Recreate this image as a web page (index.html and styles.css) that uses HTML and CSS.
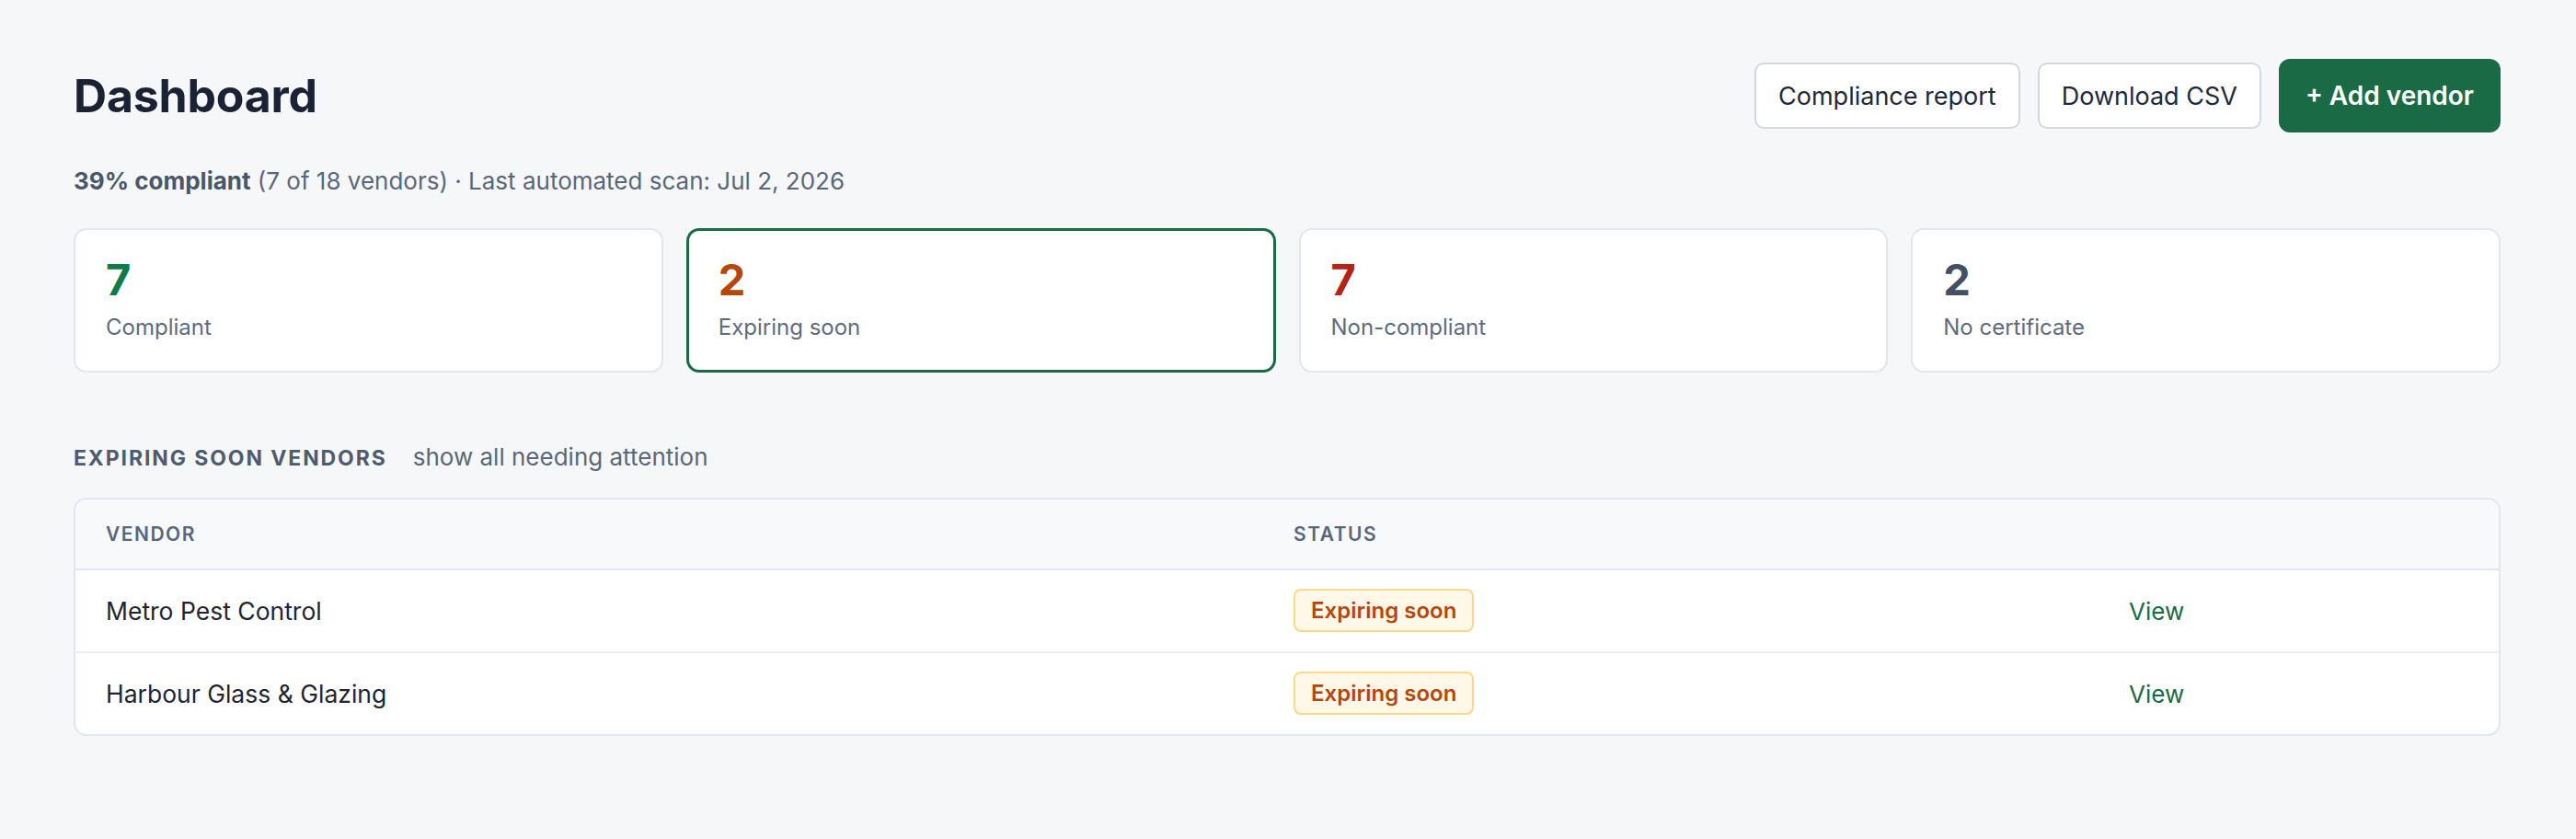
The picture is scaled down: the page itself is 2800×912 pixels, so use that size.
FILE: index.html
```html
<!DOCTYPE html>
<html lang="en">
<head>
    <meta charset="UTF-8">
    <meta name="viewport" content="width=device-width, initial-scale=1.0">
    <title>Dashboard</title>
    <link rel="stylesheet" href="styles.css">
</head>
<body>
    <div class="page">
        <div class="page-head">
            <h1>Dashboard</h1>
            <div class="actions">
                <button class="btn btn-outline">Compliance report</button>
                <button class="btn btn-outline">Download CSV</button>
                <button class="btn btn-primary">+ Add vendor</button>
            </div>
        </div>

        <p class="summary"><strong>39% compliant</strong> (7 of 18 vendors) · Last automated scan: Jul 2, 2026</p>

        <div class="stats">
            <div class="stat-card">
                <div class="stat-value green">7</div>
                <div class="stat-label">Compliant</div>
            </div>
            <div class="stat-card active">
                <div class="stat-value orange">2</div>
                <div class="stat-label">Expiring soon</div>
            </div>
            <div class="stat-card">
                <div class="stat-value red">7</div>
                <div class="stat-label">Non-compliant</div>
            </div>
            <div class="stat-card">
                <div class="stat-value slate">2</div>
                <div class="stat-label">No certificate</div>
            </div>
        </div>

        <div class="section-head">
            <h2>Expiring soon vendors</h2>
            <a href="#" class="section-link">show all needing attention</a>
        </div>

        <div class="table-wrap">
            <table>
                <colgroup>
                    <col class="col-vendor">
                    <col class="col-status">
                    <col>
                </colgroup>
                <thead>
                    <tr>
                        <th>Vendor</th>
                        <th>Status</th>
                        <th></th>
                    </tr>
                </thead>
                <tbody>
                    <tr>
                        <td>Metro Pest Control</td>
                        <td><span class="badge">Expiring soon</span></td>
                        <td><a href="#" class="view-link">View</a></td>
                    </tr>
                    <tr>
                        <td>Harbour Glass &amp; Glazing</td>
                        <td><span class="badge">Expiring soon</span></td>
                        <td><a href="#" class="view-link">View</a></td>
                    </tr>
                </tbody>
            </table>
        </div>
    </div>
</body>
</html>
```

FILE: styles.css
```css
body {
    margin: 0;
    background-color: #f6f7f9;
    font-family: Inter, "Noto Sans", sans-serif;
    color: #1a2233;
}

.page {
    padding: 64px 82px 0 80px;
}

/* header row */
.page-head {
    display: flex;
    justify-content: space-between;
    align-items: center;
}

h1 {
    margin: 0;
    font-size: 50px;
    font-weight: 700;
    line-height: 1.2;
    color: #1a2233;
    letter-spacing: -0.2px;
}

.actions {
    display: flex;
    align-items: center;
    gap: 19px;
}

.btn {
    font-family: inherit;
    box-sizing: border-box;
    cursor: pointer;
}

.btn-outline {
    height: 72px;
    padding: 0 24px;
    font-size: 27px;
    color: #1f2937;
    background-color: #fff;
    border: 2px solid #d3d7df;
    border-radius: 10px;
}

.btn-primary {
    height: 80px;
    padding: 0 29px;
    font-size: 28px;
    font-weight: 600;
    color: #fff;
    background-color: #1a6b45;
    border: none;
    border-radius: 12px;
}

.summary {
    margin: 34px 0 0;
    font-size: 26px;
    line-height: 1.45;
    color: #5b6778;
}

.summary strong {
    font-weight: 700;
    color: #4b5668;
}

/* stat cards */
.stats {
    display: grid;
    grid-template-columns: repeat(4, 1fr);
    gap: 25px;
    margin-top: 32px;
}

.stat-card {
    background-color: #fff;
    border: 2px solid #e3e6eb;
    border-radius: 14px;
    padding: 26px 33px 29px;
}

.stat-card.active {
    border: 3px solid #1a6b45;
    padding: 25px 32px 28px;
}

.stat-value {
    font-size: 47px;
    font-weight: 700;
    line-height: 56px;
}

.stat-label {
    margin-top: 6px;
    font-size: 24px;
    line-height: 36px;
    color: #5f6b7c;
}

.green { color: #0f7a4a; }
.orange { color: #b5470b; }
.red { color: #b42318; }
.slate { color: #434f63; }

/* section */
.section-head {
    display: flex;
    align-items: baseline;
    gap: 28px;
    margin-top: 72px;
}

h2 {
    margin: 0;
    font-size: 23px;
    font-weight: 700;
    line-height: 1.5;
    text-transform: uppercase;
    letter-spacing: 1.9px;
    color: #4f5b6e;
}

.section-link {
    font-size: 26px;
    line-height: 1.5;
    color: #5b6778;
    text-decoration: none;
}

/* table */
.table-wrap {
    margin-top: 25px;
    background-color: #fff;
    border: 2px solid #e3e6eb;
    border-radius: 14px;
    overflow: hidden;
}

table {
    width: 100%;
    border-collapse: collapse;
    table-layout: fixed;
}

.col-vendor { width: 1291px; }
.col-status { width: 908px; }

th {
    height: 75px;
    padding: 0 33px;
    text-align: left;
    font-size: 21px;
    font-weight: 600;
    letter-spacing: 1.5px;
    text-transform: uppercase;
    color: #5b6778;
    background-color: #f8f9fb;
    border-bottom: 2px solid #e3e6eb;
}

td {
    height: 88px;
    padding: 0 33px;
    font-size: 26.5px;
    color: #1f2430;
}

tbody tr + tr td {
    border-top: 2px solid #eceef2;
}

.badge {
    display: inline-block;
    box-sizing: border-box;
    height: 47px;
    line-height: 43px;
    padding: 0 17px;
    font-size: 24px;
    font-weight: 600;
    color: #b5470b;
    background-color: #fff8e8;
    border: 2px solid #fcd98a;
    border-radius: 8px;
}

.view-link {
    font-size: 26px;
    color: #1a6b45;
    text-decoration: none;
}
```
